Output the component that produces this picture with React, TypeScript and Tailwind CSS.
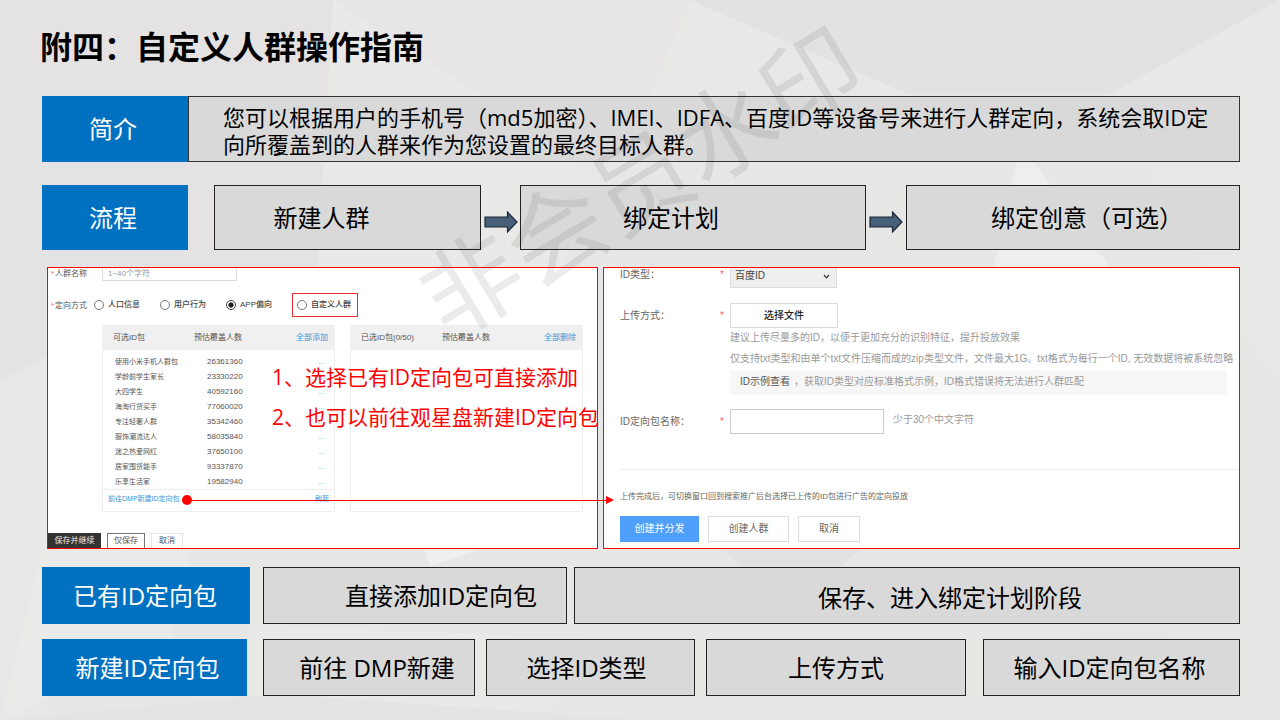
import React from 'react';

const available = [
  { name: '使用小米手机人群包', count: '26361360' },
  { name: '学龄前学生家长', count: '23330220' },
  { name: '大四学生', count: '40592160' },
  { name: '海淘行货买手', count: '77060020' },
  { name: '专注轻奢人群', count: '35342460' },
  { name: '服饰潮流达人', count: '58035840' },
  { name: '迷之热爱网红', count: '37650100' },
  { name: '居家囤货能手', count: '93337870' },
  { name: '乐享生活家', count: '19582940' },
];

const Backdrop = () => (
  <svg
    className="absolute inset-0 -z-10 h-full w-full"
    viewBox="0 0 1280 720"
    preserveAspectRatio="none"
    aria-hidden="true"
  >
    <rect width="1280" height="720" fill="#e7e7e6" />
    <polygon points="0,0 333,0 322,183 315,380 0,380" fill="#e4e2e3" />
    <polygon points="0,380 60,350 42,720 0,720" fill="#e8e8e8" />
    <polygon points="333,0 480,95 600,185 560,267 318,267" fill="#e9e9e8" />
    <polygon points="333,0 690,0 650,95 480,95" fill="#e7e5e6" />
    <polygon points="690,0 910,95 650,95" fill="#e8e8e6" />
    <polygon points="690,0 1280,0 1108,95 910,95" fill="#e3e1e2" />
    <polygon points="1280,0 1280,380 1240,330 1108,95" fill="#e8e8e6" />
    <polygon points="1016,162 1034,162 1110,267 994,267" fill="#eeeeec" />
    <polygon points="42,550 190,550 170,640 0,720" fill="#eaeae9" />
    <polygon points="425,550 480,550 430,566" fill="#efefee" />
    <polygon points="725,550 860,550 840,567 740,567" fill="#e2e1e1" />
    <polygon points="250,625 640,640 540,712 250,696" fill="#e9e9e8" />
    <polygon points="0,720 280,694 640,720" fill="#e5e4e3" />
    <polygon points="1090,625 1180,625 1070,720 1000,720" fill="#e5e5e4" />
  </svg>
);

const Tag = ({ className = '', children }: { className?: string; children: React.ReactNode }) => (
  <h2 className={`flex items-center justify-center bg-[#0070c0] text-2xl text-white ${className}`}>
    {children}
  </h2>
);

const Step = ({ className = '', children }: { className?: string; children: React.ReactNode }) => (
  <div
    className={`flex items-center justify-center border border-[#222] bg-[#d9d9d9] text-2xl whitespace-nowrap ${className}`}
  >
    {children}
  </div>
);

const Arrow = () => (
  <div className="flex items-center justify-center pt-2">
    <svg width="34" height="22" viewBox="0 0 34 22" aria-hidden="true">
      <path
        d="M1 6H23.5V1L33 11L23.5 21V16H1Z"
        fill="#475f78"
        stroke="#1b2632"
        strokeWidth="1.2"
      />
    </svg>
  </div>
);

const Target = ({ label, checked = false }: { label: string; checked?: boolean }) => (
  <label className="flex items-center gap-1 text-[8px] font-medium whitespace-nowrap text-[#444]">
    <input
      type="radio"
      name="target"
      defaultChecked={checked}
      className="h-2.5 w-2.5 appearance-none rounded-full border border-[#777] bg-white checked:border-[#444] checked:bg-[radial-gradient(circle_closest-side,#222_55%,#fff_75%)]"
    />
    {label}
  </label>
);

const AudiencePanel = () => (
  <section className="h-[282px] overflow-hidden border border-[#ff0000] bg-white text-[8px] leading-3 text-[#555]">
    <div className="-mt-2 flex h-[21px] items-center">
      <span className="w-[7px] pt-1.5 pl-[3px] text-[#e66]">*</span>
      <label htmlFor="audience" className="w-[47px] pt-1.5">
        人群名称
      </label>
      <input
        id="audience"
        placeholder="1~40个字符"
        className="h-[21px] w-[135px] border border-[#ddd] px-[5px] pt-1.5 placeholder:text-[#999]"
      />
    </div>
    <div className="mt-3 flex h-6 items-center">
      <span className="w-[7px] pt-0.5 pl-[3px] text-[#e66]">*</span>
      <span className="w-[39px] pt-0.5">定向方式</span>
      <div className="flex items-center gap-5">
        <Target label="人口信息" />
        <Target label="用户行为" />
        <Target label="APP偏向" checked />
        <div className="flex h-6 w-[66px] items-center border border-[#f03030] px-1">
          <Target label="自定义人群" />
        </div>
      </div>
    </div>
    <div className="ml-[54px] mt-2 flex gap-[15px]">
      <div className="h-[187px] w-[233px] border border-[#eee]">
        <table className="w-full table-fixed text-left">
          <thead className="h-6 bg-[#f0f0f0]">
            <tr>
              <th className="w-[91px] pl-2.5 font-normal">可选ID包</th>
              <th className="font-normal">预估覆盖人数</th>
              <th className="w-[60px] pr-1.5 text-right font-normal">
                <button className="text-[#3a96d6]">全部添加</button>
              </th>
            </tr>
          </thead>
          <tbody className="before:block before:h-1">
            {available.map((row) => (
              <tr key={row.name} className="h-[15px]">
                <td className="pl-3 text-[7px] whitespace-nowrap">{row.name}</td>
                <td className="pl-[13px]">{row.count}</td>
                <td className="pr-[9px] text-right text-[#8ab4d8]">...</td>
              </tr>
            ))}
          </tbody>
        </table>
        <div className="flex h-[23px] items-center justify-between border-t border-[#eee] px-[5px] pb-1 text-[7px] text-[#3a96d6]">
          <a href="#dmp">前往DMP新建ID定向包</a>
          <button>刷新</button>
        </div>
      </div>
      <div className="h-[187px] w-[233px] border border-[#eee]">
        <table className="w-full table-fixed text-left">
          <thead className="h-6 bg-[#f0f0f0]">
            <tr>
              <th className="w-[91px] pl-2.5 font-normal">已选ID包(0/50)</th>
              <th className="font-normal">预估覆盖人数</th>
              <th className="w-[60px] pr-1.5 text-right font-normal">
                <button className="text-[#3a96d6]">全部删除</button>
              </th>
            </tr>
          </thead>
        </table>
      </div>
    </div>
    <div className="mt-[21px] flex h-4 gap-1.5 text-[8px]">
      <button className="w-[53px] bg-[#333] text-[#eee]">保存并继续</button>
      <button className="w-[38px] border border-[#777]">仅保存</button>
      <button className="w-8 border border-[#e5e5e5]">取消</button>
    </div>
  </section>
);

const Label = ({ htmlFor, children }: { htmlFor: string; children: React.ReactNode }) => (
  <>
    <label htmlFor={htmlFor} className="w-[100px] shrink-0">
      {children}
    </label>
    <span className="w-2.5 shrink-0 text-[#e66]">*</span>
  </>
);

const UploadPanel = () => (
  <section className="h-[282px] min-w-0 overflow-hidden border border-[#ff0000] bg-white pl-4 text-[10px] leading-4 text-[#666]">
    <div className="-mt-1.5 flex h-[26px] items-center">
      <Label htmlFor="id-type">ID类型：</Label>
      <div className="relative">
        <select
          id="id-type"
          className="block h-[26px] w-[107px] appearance-none border border-[#ddd] bg-[#efefef] px-1 pt-0.5 text-[#444]"
        >
          <option>百度ID</option>
        </select>
        <svg
          className="pointer-events-none absolute top-[12px] right-[7px]"
          width="7"
          height="5"
          viewBox="0 0 7 5"
          fill="none"
          stroke="#333"
          strokeWidth="1.2"
        >
          <path d="M1 1L3.5 3.8L6 1" />
        </svg>
      </div>
    </div>
    <div className="mt-[15px] flex h-[25px] items-center">
      <Label htmlFor="upload">上传方式：</Label>
      <button id="upload" className="h-full w-[108px] border border-[#ddd] font-medium text-[#222]">
        选择文件
      </button>
    </div>
    <div className="ml-[110px] mr-3 text-[#999]">
      <p className="mt-0.5 whitespace-nowrap">建议上传尽量多的ID，以便于更加充分的识别特征，提升投放效果</p>
      <p className="mt-[5px] whitespace-nowrap">
        仅支持txt类型和由单个txt文件压缩而成的zip类型文件，文件最大1G。txt格式为每行一个ID, 无效数据将被系统忽略
      </p>
      <p className="mt-[3px] h-[25px] bg-[#f7f7f7] pt-1 pl-2.5">
        <a href="#sample" className="mr-1 text-[#555]">
          ID示例查看
        </a>
        ，获取ID类型对应标准格式示例，ID格式错误将无法进行人群匹配
      </p>
    </div>
    <div className="mt-3.5 flex h-[25px] items-center">
      <Label htmlFor="pack">ID定向包名称：</Label>
      <input id="pack" className="h-full w-[154px] border border-[#ccc]" />
      <span className="pb-1 pl-[9px] text-[#999]">少于30个中文字符</span>
    </div>
    <div className="mt-[35px] border-t border-[#eee] pt-[19px]">
      <p className="text-[8px]">上传完成后，可切换窗口回到搜索推广后台选择已上传的ID包进行广告的定向投放</p>
      <div className="mt-[11px] flex h-[26px] gap-[9px]">
        <button className="w-[79px] bg-[#4fa0fa] text-white">创建并分发</button>
        <button className="w-[81px] border border-[#ddd]">创建人群</button>
        <button className="w-[62px] border border-[#ddd]">取消</button>
      </div>
    </div>
  </section>
);

const App = () => {
  return (
    <main className="relative isolate min-h-screen overflow-hidden pr-10 pl-[42px] pt-[27px] pb-6 font-['Open_Sans','Noto_Sans_CJK_SC',sans-serif] text-black">
      <Backdrop />
      <h1 className="-ml-0.5 text-[32px] leading-10 font-bold">附四：自定义人群操作指南</h1>

      <section className="mt-[29px] flex h-[66px]">
        <Tag className="w-[146px] shrink-0 pr-1">简介</Tag>
        <div className="flex flex-1 items-center border border-[#333] bg-[#d9d9d9] pt-1 pl-[34px]">
          <p className="text-[22px] leading-[27px]">
            您可以根据用户的手机号（md5加密）、IMEI、IDFA、百度ID等设备号来进行人群定向，系统会取ID定
            <br />
            向所覆盖到的人群来作为您设置的最终目标人群。
          </p>
        </div>
      </section>

      <section className="mt-[23px] grid h-[65px] grid-cols-[172px_267fr_39px_346fr_40px_334fr]">
        <Tag className="mr-[26px] pr-1">流程</Tag>
        <Step className="pr-[52px]">新建人群</Step>
        <Arrow />
        <Step className="pr-11">绑定计划</Step>
        <Arrow />
        <Step className="pl-7">绑定创意（可选）</Step>
      </section>

      <div className="mt-[17px] ml-[5px] grid grid-cols-[551fr_637fr] gap-[5px] font-['Liberation_Sans','Noto_Sans_CJK_SC',sans-serif]">
        <div className="relative z-10 min-w-0">
          <AudiencePanel />
          <ol className="absolute top-[90px] left-[225px] text-[21px] leading-10 whitespace-nowrap text-[#ff0000] font-['Open_Sans','Noto_Sans_CJK_SC',sans-serif]">
            <li>1、选择已有ID定向包可直接添加</li>
            <li>2、也可以前往观星盘新建ID定向包</li>
          </ol>
          <div className="absolute top-[228px] left-[135px] -right-4 flex items-center">
            <span className="h-2.5 w-2.5 rounded-full bg-[#ff0000]" />
            <span className="h-px flex-1 bg-[#ff0000]" />
            <svg width="8" height="8" viewBox="0 0 8 8" fill="#ff0000">
              <path d="M0 0L8 4L0 8Z" />
            </svg>
          </div>
        </div>
        <UploadPanel />
      </div>

      <section className="mt-[18px] grid h-[57px] grid-cols-[221px_311fr_666fr]">
        <Tag className="mr-[13px] pr-0.5">已有ID定向包</Tag>
        <Step className="mr-[7px] pl-[52px]">直接添加ID定向包</Step>
        <Step className="pt-1 pl-[86px]">保存、进入绑定计划阶段</Step>
      </section>

      <section className="mt-[15px] grid h-[57px] grid-cols-[221px_223fr_220fr_277fr_257fr]">
        <Tag className="mr-4 pl-1.5">新建ID定向包</Tag>
        <Step className="mr-[11px] pl-4">前往 DMP新建</Step>
        <Step className="mr-[11px] pr-2">选择ID类型</Step>
        <Step className="mr-[17px]">上传方式</Step>
        <Step className="pr-1">输入ID定向包名称</Step>
      </section>

      <div className="pointer-events-none absolute top-[121px] left-1/2 z-20 -translate-x-1/2 -rotate-[31deg] text-[99px] leading-[120px] whitespace-nowrap text-black/8">
        非会员水印
      </div>
    </main>
  );
};

export default App;
